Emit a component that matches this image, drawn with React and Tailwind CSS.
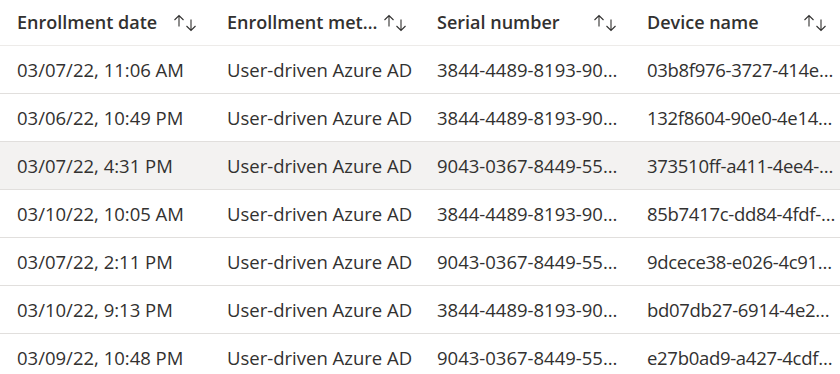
import React from "react";

const rows = [
  ["03/07/22, 11:06 AM", "User-driven Azure AD", "3844-4489-8193-9033-0566-84", "03b8f976-3727-414e-9a3b-5c2f"],
  ["03/06/22, 10:49 PM", "User-driven Azure AD", "3844-4489-8193-9033-0566-84", "132f8604-90e0-4e14-8c2d-7a1e"],
  ["03/07/22, 4:31 PM", "User-driven Azure AD", "9043-0367-8449-5571-2301-57", "373510ff-a411-4ee4-b1a0-3d9c"],
  ["03/10/22, 10:05 AM", "User-driven Azure AD", "3844-4489-8193-9033-0566-84", "85b7417c-dd84-4fdf-9e11-0b4a"],
  ["03/07/22, 2:11 PM", "User-driven Azure AD", "9043-0367-8449-5571-2301-57", "9dcece38-e026-4c91-a7b2-6f08"],
  ["03/10/22, 9:13 PM", "User-driven Azure AD", "3844-4489-8193-9033-0566-84", "bd07db27-6914-4e22-b3c4-1e77"],
  ["03/09/22, 10:48 PM", "User-driven Azure AD", "9043-0367-8449-5571-2301-57", "e27b0ad9-a427-4cdf-8d55-9a63"],
];

const headers = ["Enrollment date", "Enrollment method", "Serial number", "Device name"];

function SortIcon() {
  return (
    <svg width="24" height="18" viewBox="0 0 24 18" fill="none" stroke="#323130" strokeWidth="1.1" className="shrink-0">
      <path d="M6 1.5V12.5M1.5 6L6 1.5L10.5 6" />
      <path d="M18 5.5V16.5M13.5 12L18 16.5L22.5 12" />
    </svg>
  );
}

export default function App() {
  return (
    <div
      className="w-[840px] h-[374px] overflow-hidden bg-white text-[#323130]"
      style={{ fontFamily: '"Open Sans", "Noto Sans", sans-serif' }}
    >
      <div className="w-[840px]">
        <div className="flex h-[46px] border-b border-[#edebe9]">
          {headers.map((h) => (
            <div key={h} className="w-[210px] shrink-0 pl-[17px] pr-[13px] flex items-center">
              <div className="flex items-center justify-between w-full gap-[2px]">
                <span className="truncate text-[18px] font-semibold">{h}</span>
                <SortIcon />
              </div>
            </div>
          ))}
        </div>
        {rows.map((r, i) => (
          <div
            key={i}
            className={`flex h-[48px] border-b border-[#e1dfdd] ${i === 2 ? "bg-[#f3f2f1]" : ""}`}
          >
            {r.map((c, j) => (
              <div key={j} className="w-[210px] shrink-0 pl-[17px] pr-[3px] flex items-center">
                <span className={`truncate text-[18.5px] ${j === 3 ? "tracking-[-0.3px]" : ""}`}>{c}</span>
              </div>
            ))}
          </div>
        ))}
      </div>
    </div>
  );
}
